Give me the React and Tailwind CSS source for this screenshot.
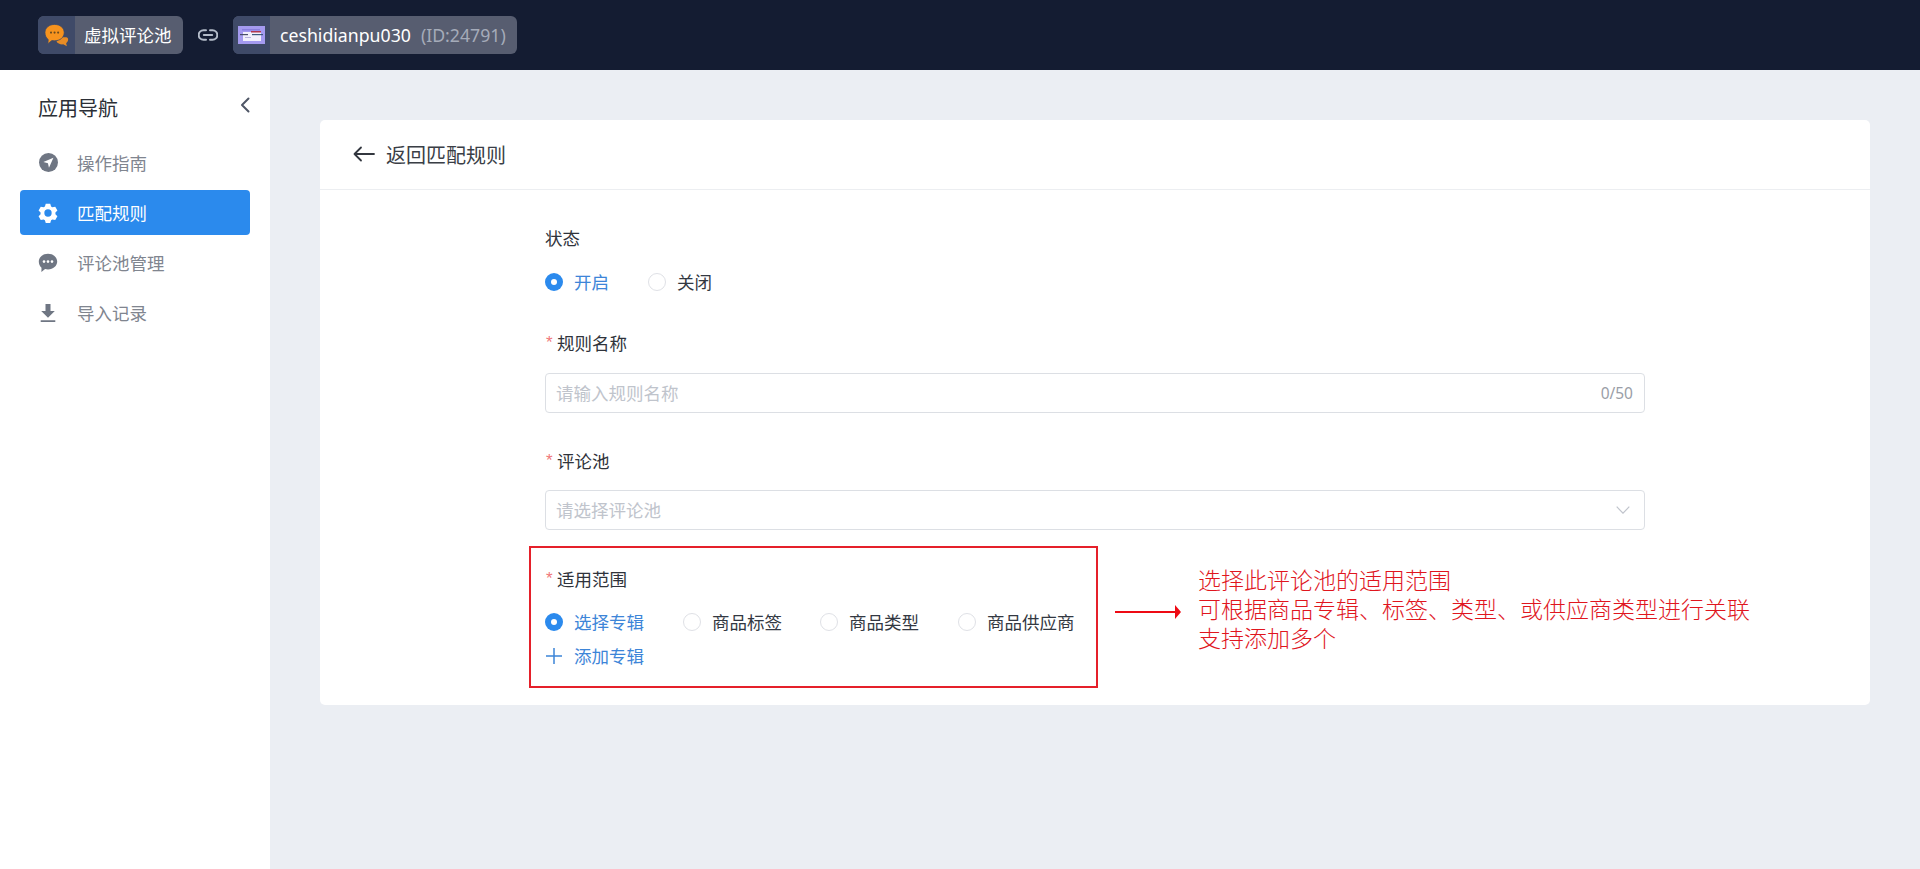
const cjk = "font-['Noto_Sans_CJK_SC','Noto_Sans',sans-serif]";

function Compass({ className }) {
  return (
    <svg viewBox="0 0 20 20" className={className}>
      <circle cx="10" cy="10" r="10" fill="currentColor" />
      <path d="M15.200 4.900 L4.600 9.600 L9.400 10.700 L10.500 15.600 Z" fill="#fff" />
    </svg>
  );
}
function Gear({ className }) {
  return (
    <svg viewBox="0 0 24 24" className={className}>
      <path fill="currentColor" fillRule="evenodd" d="M9.300 1h5.400l1 3.300 1.600.9 3.400-.8 2.600 4.600-2.400 2.500v1.900l2.400 2.500-2.600 4.600-3.400-.8-1.600.9-1 3.300H9.300l-1-3.300-1.600-.9-3.400.8-2.600-4.600 2.400-2.500v-1.900L.7 9l2.600-4.600 3.400.8 1.600-.9zM12 7.600a4.400 4.400 0 1 0 0 8.800 4.400 4.400 0 0 0 0-8.800z" />
    </svg>
  );
}
function Chat({ className }) {
  return (
    <svg viewBox="0 0 20 20" className={className}>
      <path fill="currentColor" d="M10 .8c5.200 0 9.200 3.400 9.200 7.800s-4 7.800-9.200 7.800c-1 0-2-.1-2.900-.4L3.400 18.900l.1-4.200C1.800 13.300.8 11.100.8 8.600.8 4.200 4.800.8 10 .8z" />
      <circle cx="6" cy="8.600" r="1.300" fill="#fff" /><circle cx="10" cy="8.600" r="1.300" fill="#fff" /><circle cx="14" cy="8.600" r="1.300" fill="#fff" />
    </svg>
  );
}
function Download({ className }) {
  return (
    <svg viewBox="0 0 20 20" className={className}>
      <path fill="currentColor" d="M7.500 1h5v7h4.300L10 14.800 3.200 8h4.300zM2.700 17.300h14.600v1.700H2.700z" />
    </svg>
  );
}
function BubblesLogo() {
  return (
    <svg viewBox="0 0 26 26" className="w-[25px] h-[25px]">
      <path fill="#e88c25" d="M17 15c4 0 7.500-1 8 1.500.4 2-.6 3.600-2 4.500l.8 3.200-3.800-2c-2.500.5-6-1-7-3z" />
      <path fill="#f7931e" stroke="#3f4a68" strokeWidth="0.800" d="M11 1.500c5.700 0 10 3.500 10 8.500s-4.300 8.500-10 8.500c-.9 0-1.800-.1-2.700-.3L4 21.500l.4-4.300C2.300 15.700 1 13 1 10 1 5 5.300 1.500 11 1.500z" />
      <circle cx="7.300" cy="10" r="1.100" fill="#6b4a1e" /><circle cx="11" cy="10" r="1.100" fill="#6b4a1e" /><circle cx="14.700" cy="10" r="1.100" fill="#6b4a1e" />
    </svg>
  );
}
function Thumb() {
  return (
    <svg viewBox="0 0 27 18" className="w-[27px] h-[18px]">
      <rect width="27" height="18" fill="#a49af0" />
      <rect x="4" y="3" width="18" height="1.500" fill="#8a7fe0" />
      <rect x="5" y="6" width="18" height="9" fill="#f1effc" />
      <rect x="13" y="5" width="10" height="1.500" fill="#b0354f" />
      <rect x="2" y="8" width="8" height="1.200" fill="#4a4f6a" />
      <rect x="14" y="8" width="11" height="1.200" fill="#3c5a80" />
      <rect x="7" y="11" width="6" height="1" fill="#b8b4dc" />
    </svg>
  );
}
function LinkIcon() {
  return (
    <svg viewBox="0 0 20 12" className="w-[20px] h-[12px]" fill="none" stroke="#b4bcc9" strokeWidth="2" strokeLinecap="round">
      <path d="M8 1.200H5.500a4.800 4.800 0 0 0 0 9.600H8" />
      <path d="M12 1.200h2.500a4.800 4.800 0 0 1 0 9.600H12" />
      <path d="M5.800 6h8.400" />
    </svg>
  );
}

function Radio({ checked, label, className = "" }) {
  return (
    <label className={`flex items-center ${className}`}>
      {checked ? (
        <span className="w-[18px] h-[18px] rounded-full bg-[#2b8aed] flex items-center justify-center shrink-0">
          <span className="w-[6px] h-[6px] rounded-full bg-white" />
        </span>
      ) : (
        <span className="w-[18px] h-[18px] rounded-full border border-[#dfe1e6] bg-white shrink-0" />
      )}
      <span className={`ml-[11px] whitespace-nowrap ${checked ? "text-[#3d85d8]" : "text-[#333842]"}`}>{label}</span>
    </label>
  );
}

function Label({ required, children }) {
  return (
    <div className="h-[24px] flex items-center text-[#2f333b]">
      {required && <span className="text-[#f0787a] text-[17px] w-[12px] pl-px font-['Liberation_Sans',sans-serif]">*</span>}
      {children}
    </div>
  );
}

function MenuItem({ Icon, label, active, iconClass = "w-[20px] h-[20px]" }) {
  return (
    <div className={`h-[45px] rounded-[4px] flex items-center pl-[18px] ${active ? "bg-[#2b8aed] text-white" : "text-[#6f7683]"}`}>
      <span className="w-[20px] h-[20px] flex items-center justify-center shrink-0">
        <Icon className={iconClass} />
      </span>
      <span className={`ml-[19px] ${active ? "text-white" : "text-[#80858f]"}`}>{label}</span>
    </div>
  );
}

export default function App() {
  return (
    <div className={`${cjk} w-full min-h-[869px] bg-[#ebeef3] text-[17.5px] leading-[24px] flex flex-col`}>
      <header className="h-[70px] bg-[#141c32] flex items-center pl-[38px] shrink-0">
        <div className="h-[38px] flex items-stretch rounded-[6px] overflow-hidden bg-[#575d70]">
          <div className="w-[37px] bg-[#3f4a68] flex items-center justify-center"><BubblesLogo /></div>
          <div className="pl-[9px] flex items-center text-white w-[108px] whitespace-nowrap">虚拟评论池</div>
        </div>
        <div className="w-[50px] flex items-center justify-center"><LinkIcon /></div>
        <div className="h-[38px] flex items-stretch rounded-[6px] overflow-hidden bg-[#575d70]">
          <div className="w-[37px] bg-[#3f4a68] flex items-center justify-center"><Thumb /></div>
          <div className="pl-[10px] flex items-center whitespace-nowrap font-['Noto_Sans',sans-serif] text-[17.7px] w-[247px]">
            <span className="text-white">ceshidianpu030</span>
            <span className="ml-[10px] text-[#a5abb9]">(ID:24791)</span>
          </div>
        </div>
      </header>
      <div className="flex flex-1">
        <aside className="w-[270px] bg-white shrink-0 px-[20px] pt-[26px]">
          <div className="h-[24px] flex items-center justify-between pl-[18px] pr-0 text-[20px] text-[#2b2f36] mb-[20px]">
            <span>应用导航</span>
            <svg viewBox="0 0 10 16" className="w-[10px] h-[16px] -mt-[6px]" fill="none" stroke="#4f5666" strokeWidth="2" strokeLinecap="round" strokeLinejoin="round">
              <path d="M8.500 1.500 2 8l6.500 6.500" />
            </svg>
          </div>
          <div className="flex flex-col gap-[5px]">
            <MenuItem Icon={Compass} label="操作指南" iconClass="w-[19px] h-[19px]" />
            <MenuItem Icon={Gear} label="匹配规则" active iconClass="w-[22px] h-[22px]" />
            <MenuItem Icon={Chat} label="评论池管理" />
            <MenuItem Icon={Download} label="导入记录" />
          </div>
        </aside>
        <main className="flex-1 pl-[50px] pr-[50px] pt-[50px]">
          <div className="bg-white rounded-[5px] h-[585px]">
            <div className="h-[70px] border-b border-[#eceef1] flex items-center pl-[33px] text-[20px] text-[#3a3e46]">
              <svg viewBox="0 0 22 16" className="w-[22px] h-[16px] -mt-[2px]" fill="none" stroke="#33373f" strokeWidth="1.800" strokeLinecap="round" strokeLinejoin="round">
                <path d="M21 8H1.500M8 1.500 1.500 8 8 14.500" />
              </svg>
              <span className="ml-[11px]">返回匹配规则</span>
            </div>
            <div className="w-[1100px] mx-auto pt-[36px] relative">
              <Label>状态</Label>
              <div className="flex mt-[20px] h-[24px]">
                <Radio checked label="开启" />
                <Radio label="关闭" className="ml-[39px]" />
              </div>
              <div className="mt-[37px]"><Label required>规则名称</Label></div>
              <div className="mt-[18px] h-[40px] border border-[#dcdfe4] rounded-[4px] flex items-center justify-between pl-[10px] pr-[11px]">
                <span className="text-[#c0c4cc]">请输入规则名称</span>
                <span className="text-[#9a9ea7] text-[15.5px] font-['Noto_Sans',sans-serif]">0/50</span>
              </div>
              <div className="mt-[36px]"><Label required>评论池</Label></div>
              <div className="mt-[17px] h-[40px] border border-[#dcdfe4] rounded-[4px] flex items-center justify-between pl-[10px] pr-[14px]">
                <span className="text-[#c0c4cc]">请选择评论池</span>
                <svg viewBox="0 0 14 8" className="w-[14px] h-[8px]" fill="none" stroke="#c0c4cc" strokeWidth="1.200"><path d="M.7.700 7 7.200 13.300.700" /></svg>
              </div>
              <div className="mt-[37px]"><Label required>适用范围</Label></div>
              <div className="flex mt-[19px] h-[24px]">
                <Radio checked label="选择专辑" />
                <Radio label="商品标签" className="ml-[39px]" />
                <Radio label="商品类型" className="ml-[38px]" />
                <Radio label="商品供应商" className="ml-[39px]" />
              </div>
              <div className="flex items-center mt-[10px] h-[24px] text-[#3d85d8]">
                <svg viewBox="0 0 18 18" className="w-[18px] h-[18px]" fill="none" stroke="#3d85d8" strokeWidth="1.500"><path d="M9 1v16M1 9h16" /></svg>
                <span className="ml-[11px]">添加专辑</span>
              </div>
              {/* annotation laid over the form */}
              <div className="absolute left-[-16px] top-[356px] w-[569px] h-[142px] border-2 border-[#e5202a] pointer-events-none" />
              <svg viewBox="0 0 66 14" className="absolute left-[570px] top-[415px] w-[66px] h-[14px]">
                <path d="M0 7H60" stroke="#ee0a14" strokeWidth="2" />
                <path d="M60 0 66 7 60 14z" fill="#ee0a14" />
              </svg>
              <div className="absolute left-[653px] top-[375px] text-[23px] leading-[29px] font-light text-[#e0161e] whitespace-nowrap">
                <div>选择此评论池的适用范围</div>
                <div>可根据商品专辑、标签、类型、或供应商类型进行关联</div>
                <div>支持添加多个</div>
              </div>
            </div>
          </div>
        </main>
      </div>
    </div>
  );
}
